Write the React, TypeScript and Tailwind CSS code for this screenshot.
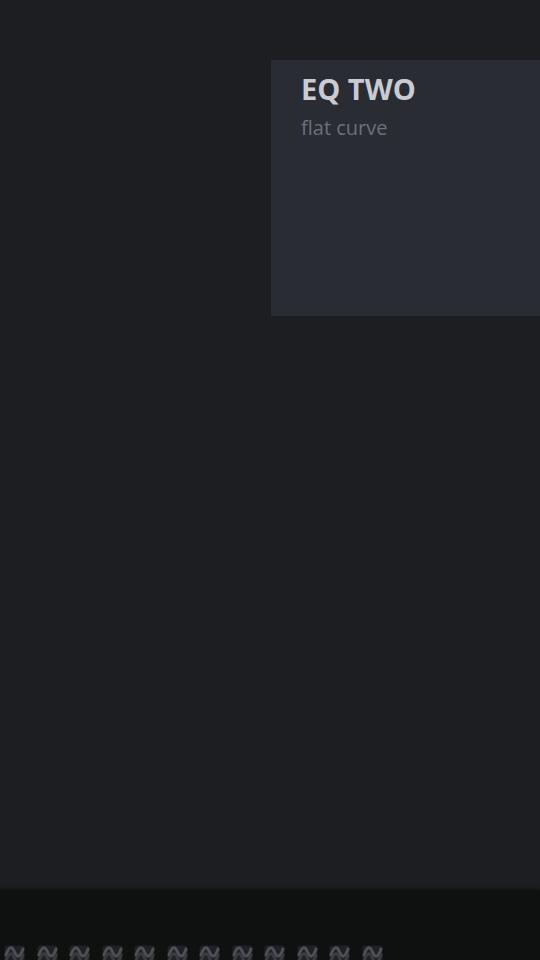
const presets = Array.from({ length: 12 }, (_, i) => i);

// Small preset tile with a sine wave
function WaveTile() {
  return (
    <svg width="21" height="20" viewBox="0 0 21 20" className="shrink-0">
      <rect x="0.5" y="0.5" width="20" height="19" rx="3" fill="#202125" />
      <path d="M2 10 C5 1, 8 1, 10.5 7 S16 13, 19 4" fill="none" stroke="#4e5056" strokeWidth="3" strokeLinecap="round" />
      <path d="M2 16 C5 7, 8 7, 10.5 13 S16 19, 19 10" fill="none" stroke="#3a3c41" strokeWidth="3" strokeLinecap="round" />
    </svg>
  );
}

export default function App() {
  return (
    <div className="h-[960px] w-[540px] overflow-hidden flex flex-col bg-[#1d1e22]" style={{ fontFamily: '"Open Sans", "Noto Sans", sans-serif' }}>
      {/* Preset panel */}
      <main className="flex-1 pt-[60px]">
        <section className="ml-auto w-[269px] h-[256px] bg-[#2a2c33] pl-[30px] pt-[11px]">
          <h2 className="text-[29px] font-bold leading-tight text-[#c9cbd3]">EQ TWO</h2>
          <p className="text-[20px] leading-snug text-[#6d707a] mt-[7px]">flat curve</p>
        </section>
      </main>

      {/* Bottom strip */}
      <footer className="h-[70px] bg-[#0f1111] flex flex-col shadow-[0_-2px_4px_rgba(0,0,0,0.3)]">
        <div className="mt-auto flex gap-[11.5px] pl-[4px] translate-y-[5px] blur-[0.6px]">
          {presets.map(i => (
            <WaveTile key={i} />
          ))}
        </div>
      </footer>
    </div>
  );
}
